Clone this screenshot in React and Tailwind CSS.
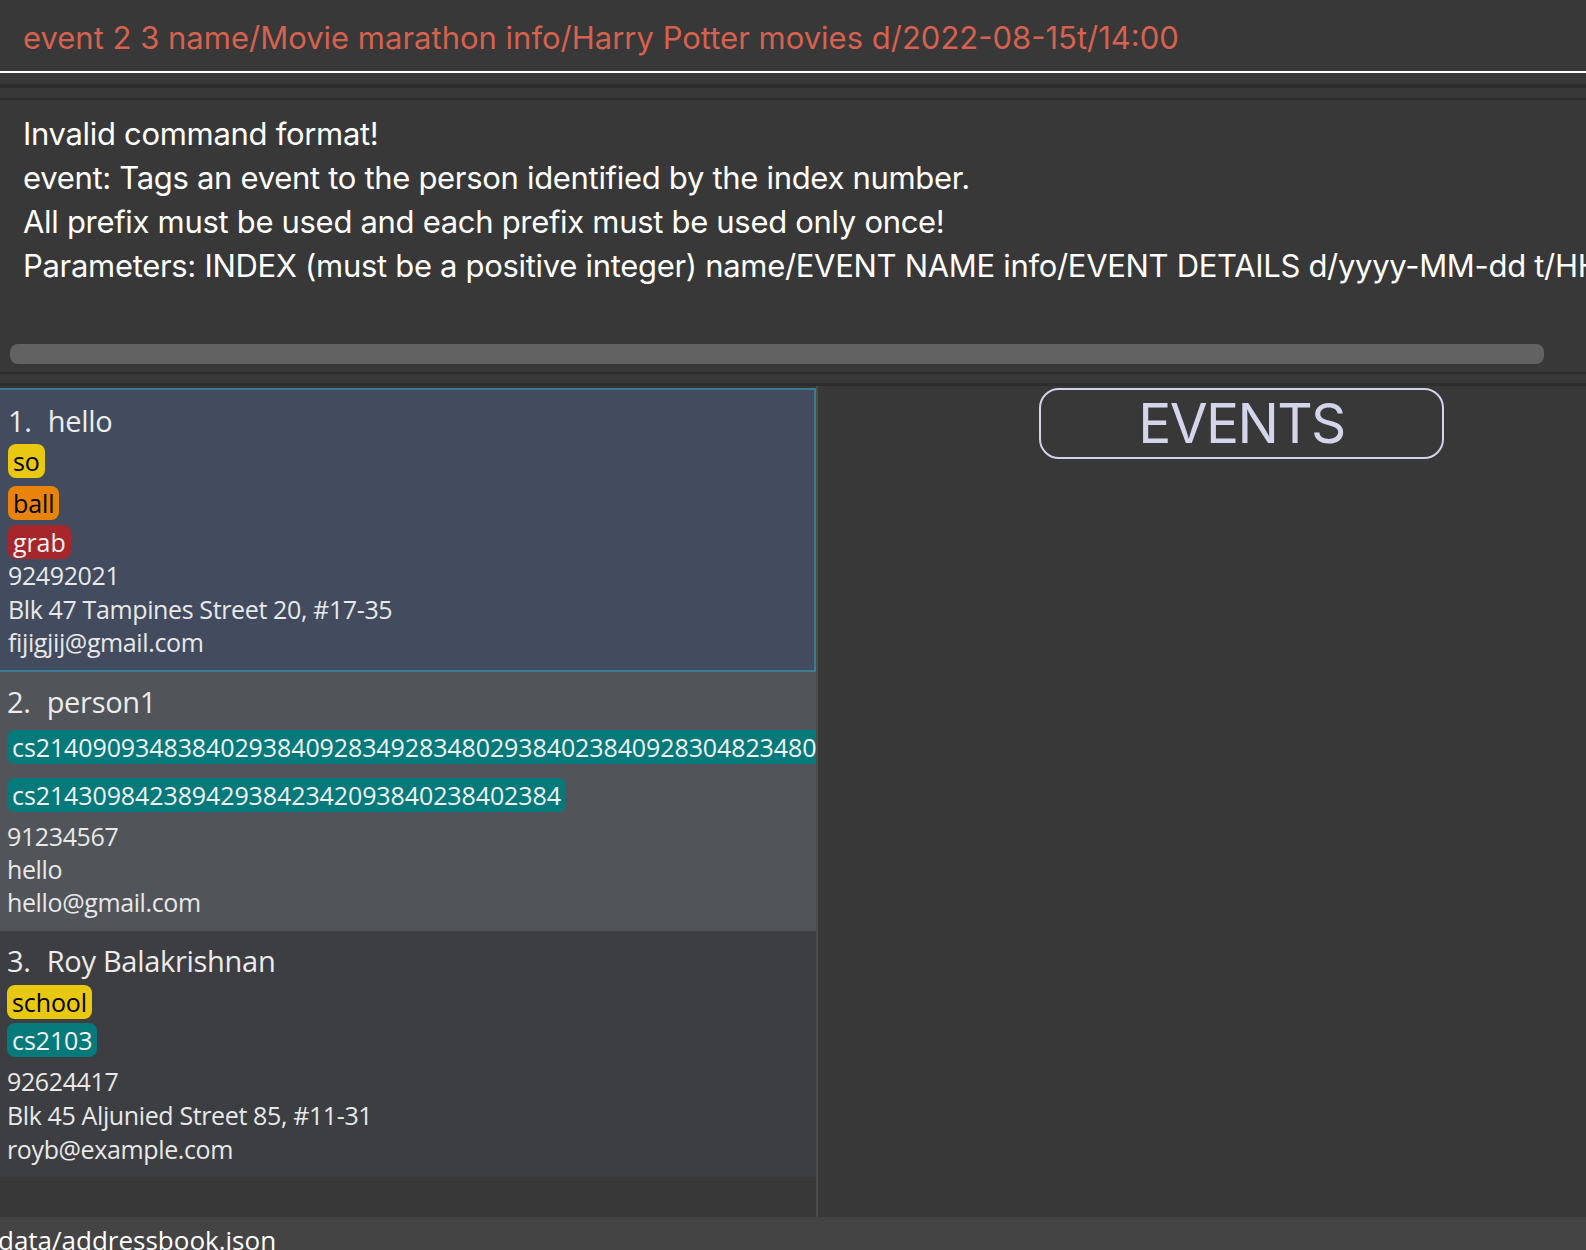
import React from "react";

const Tag = ({ children, color, dark }) => (
  <div className="flex">
    <span
      className={`inline-block h-[34px] leading-[34px] px-[5px] rounded-[8px] whitespace-nowrap tracking-[-0.004em] ${color} ${dark ? "text-black" : "text-[#f2f2f2]"}`}
    >
      {children}
    </span>
  </div>
);

const Name = ({ idx, name }) => (
  <div className="flex gap-[16px] text-[29px] leading-[40px] text-[#ececec] whitespace-nowrap tracking-[-0.01em]">
    <span>{idx}.</span>
    <span>{name}</span>
  </div>
);

export default function App() {
  return (
    <div
      className="w-[1586px] h-[1250px] bg-[#383838] overflow-hidden flex flex-col"
      style={{ fontFamily: "Inter, 'Open Sans', sans-serif" }}
    >
      {/* command box */}
      <div className="h-[73px] border-b-2 border-white pl-[23px] pt-[16px] shrink-0">
        <div className="text-[31px] leading-[44px] text-[#d6614f] whitespace-nowrap">
          event 2 3 name/Movie marathon info/Harry Potter movies d/2022-08-15t/14:00
        </div>
      </div>
      <div className="h-[11px] shrink-0" />
      <div className="h-[4px] bg-[#2d2d2d] shrink-0" />
      <div className="h-[10px] shrink-0" />
      <div className="h-[2px] bg-[#2d2d2d] shrink-0" />

      {/* result display */}
      <div className="h-[272px] shrink-0 flex flex-col">
        <div className="h-[244px] overflow-hidden pl-[23px] pt-[12px] text-[31px] leading-[44px] text-white whitespace-nowrap tracking-[-0.01em]">
          <div>Invalid command format!</div>
          <div>event: Tags an event to the person identified by the index number.</div>
          <div>All prefix must be used and each prefix must be used only once!</div>
          <div>
            Parameters: INDEX (must be a positive integer) name/EVENT NAME info/EVENT DETAILS d/yyyy-MM-dd t/HH:mm
          </div>
        </div>
        <div className="h-[20px] ml-[10px] w-[1534px] rounded-[8px] bg-[#626262]" />
      </div>
      <div className="h-[2px] bg-[#2d2d2d] shrink-0" />
      <div className="h-[9px] shrink-0" />
      <div className="h-[3px] bg-[#2d2d2d] shrink-0" />

      {/* main */}
      <div className="h-[831px] shrink-0 flex">
        <div
          className="w-[816px] shrink-0 pt-[2px] flex flex-col overflow-hidden text-[25px] text-[#e8e8e8]"
          style={{ fontFamily: "'Open Sans', sans-serif" }}
        >
          {/* card 1 */}
          <div className="bg-[#424c5e] border-y-2 border-r-2 border-[#3b7a90] pl-[8px] pt-[11px] pb-[10px] flex flex-col">
            <Name idx="1" name="hello" />
            <div className="mt-[3px] flex flex-col">
              <Tag color="bg-[#e8c810]" dark>so</Tag>
              <div className="mt-[8px]">
                <Tag color="bg-[#e8830c]" dark>ball</Tag>
              </div>
              <div className="mt-[5px]">
                <Tag color="bg-[#a6262b]">grab</Tag>
              </div>
            </div>
            <div className="leading-[33.5px] whitespace-nowrap tracking-[-0.015em]">
              <div>92492021</div>
              <div>Blk 47 Tampines Street 20, #17-35</div>
              <div>fijigjij@gmail.com</div>
            </div>
          </div>

          {/* card 2 */}
          <div className="bg-[#515559] pl-[7px] pt-[10px] pb-[12px] flex flex-col overflow-hidden">
            <Name idx="2" name="person1" />
            <div className="mt-[8px]">
              <Tag color="bg-[#067a7a]">cs2140909348384029384092834928348029384023840928304823480293840</Tag>
            </div>
            <div className="mt-[14px]">
              <Tag color="bg-[#067a7a]">cs2143098423894293842342093840238402384</Tag>
            </div>
            <div className="mt-[8px] leading-[33px] whitespace-nowrap tracking-[-0.015em]">
              <div>91234567</div>
              <div>hello</div>
              <div>hello@gmail.com</div>
            </div>
          </div>

          {/* card 3 */}
          <div className="bg-[#3c3e41] pl-[7px] pt-[10px] pb-[11px] flex flex-col">
            <Name idx="3" name="Roy Balakrishnan" />
            <div className="mt-[4px]">
              <Tag color="bg-[#e8c810]" dark>school</Tag>
            </div>
            <div className="mt-[4px]">
              <Tag color="bg-[#067a7a]">cs2103</Tag>
            </div>
            <div className="mt-[7px] leading-[34px] whitespace-nowrap tracking-[-0.015em]">
              <div>92624417</div>
              <div>Blk 45 Aljunied Street 85, #11-31</div>
              <div>royb@example.com</div>
            </div>
          </div>
        </div>
        <div className="w-[2px] shrink-0 bg-[#4b4b4b]" />
        <div className="flex-1 pt-[2px] pl-[221px]">
          <div className="w-[405px] h-[71px] border-2 border-[#d2d2e8] rounded-[20px] flex items-center justify-center text-[55px] text-[#d4d4ea] leading-none tracking-[-0.03em]">
            EVENTS
          </div>
        </div>
      </div>

      {/* status bar */}
      <div
        className="h-[33px] shrink-0 bg-[#444444] pt-[6px] text-[26px] leading-[34px] text-white whitespace-nowrap -ml-[2px]"
        style={{ fontFamily: "'Open Sans', sans-serif" }}
      >
        data/addressbook.json
      </div>
    </div>
  );
}
